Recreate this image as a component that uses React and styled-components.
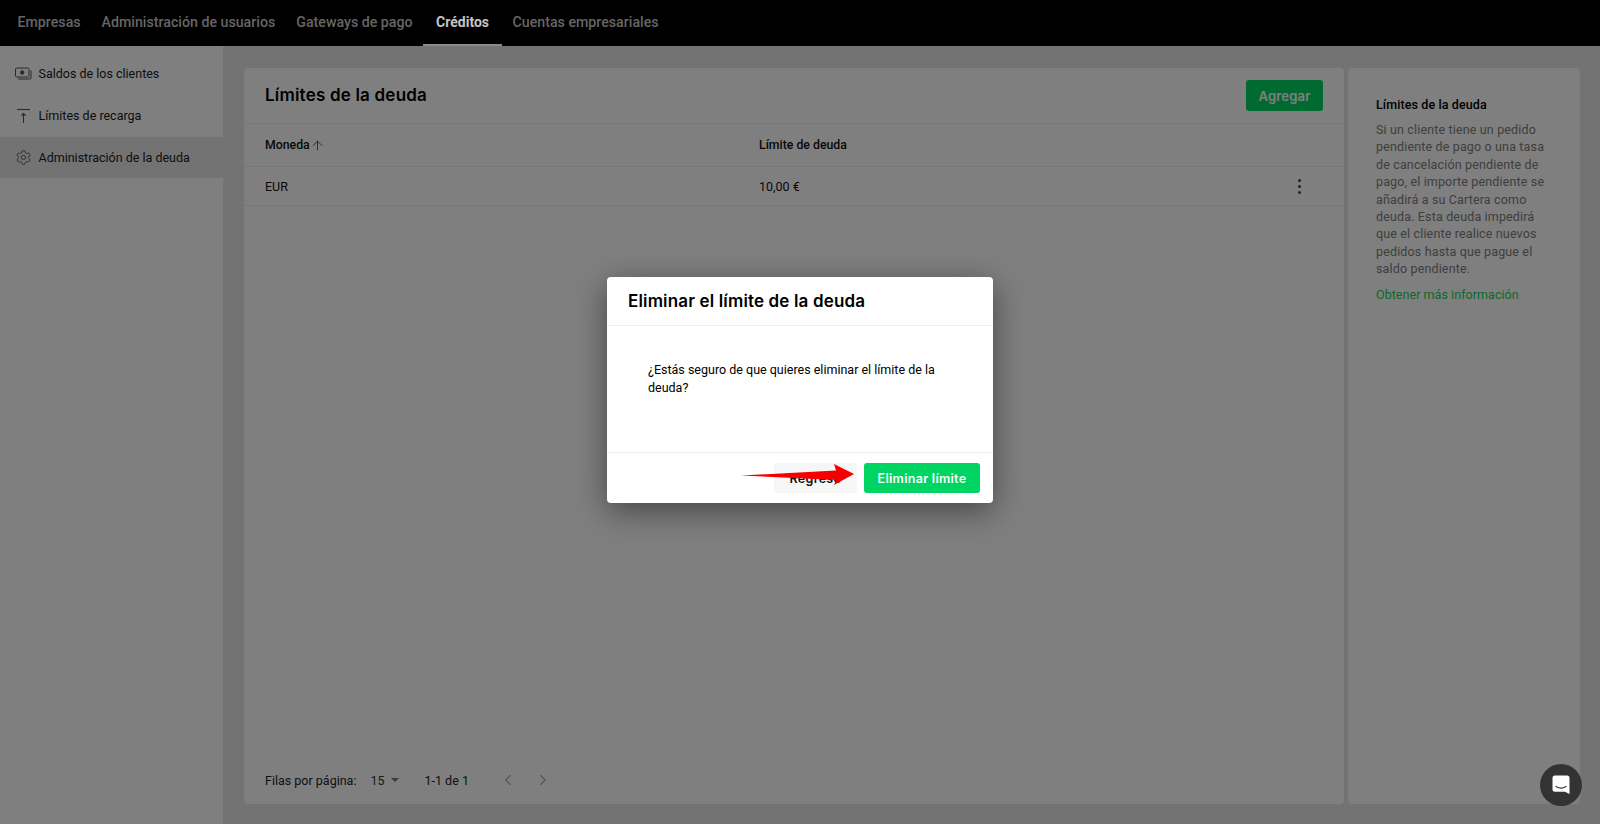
import React from "react";
import styled, { createGlobalStyle } from "styled-components";
import { Settings, ArrowUp, ChevronLeft, ChevronRight } from "lucide-react";

const GlobalStyle = createGlobalStyle`
  *, *::before, *::after {
    box-sizing: border-box;
  }
  html, body {
    margin: 0;
    padding: 0;
    height: 100%;
    overflow: hidden;
  }
  body {
    font-family: Roboto, "Liberation Sans", sans-serif;
    color: #000;
  }
`;

const HEADING_FONT = `Inter, "Open Sans", sans-serif`;

const Page = styled.div`
  position: relative;
  width: 1600px;
  height: 824px;
  display: flex;
  flex-direction: column;
  overflow: hidden;
`;

const TopBar = styled.nav`
  position: relative;
  z-index: 2;
  height: 46px;
  flex: none;
  background: #000;
  display: flex;
  align-items: stretch;
  padding-left: 7px;
`;

const Tab = styled.a`
  display: flex;
  align-items: center;
  padding: 0 ${(p) => (p.$active ? "13px" : "10.5px")};
  font-size: ${(p) => (p.$active ? "14px" : "14.2px")};
  font-weight: ${(p) => (p.$active ? 700 : 500)};
  color: ${(p) => (p.$active ? "#c4c4c4" : "#666")};
  border-bottom: 2px solid ${(p) => (p.$active ? "#8a8a8a" : "transparent")};
  white-space: nowrap;
`;

const Body = styled.div`
  flex: 1;
  display: flex;
  min-height: 0;
`;

const Sidebar = styled.aside`
  width: 223px;
  flex: none;
  background: #fff;
  padding-top: 7px;
`;

const SideItem = styled.a`
  height: ${(p) => (p.$active ? "41px" : "42px")};
  display: flex;
  align-items: center;
  gap: 6.5px;
  padding-left: 15px;
  padding-bottom: 1px;
  font-size: 12.5px;
  color: #1a1a1a;
  background: ${(p) => (p.$active ? "#e6e6e6" : "transparent")};

  svg {
    width: 17px;
    height: 17px;
    flex: none;
    color: #555;
  }
`;

const Main = styled.main`
  flex: 1;
  background: #e6e6e6;
  display: flex;
  gap: 4px;
  padding: 22px 20px 20px 21px;
  min-width: 0;
`;

const Card = styled.section`
  flex: 1;
  background: #fff;
  border-radius: 4px;
  display: flex;
  flex-direction: column;
  min-width: 0;
`;

const CardHead = styled.header`
  height: 56px;
  flex: none;
  display: flex;
  align-items: center;
  justify-content: space-between;
  padding: 0 21px 0 21px;
  border-bottom: 1px solid #eee;
`;

const CardTitle = styled.h1`
  margin: 0 0 1px;
  font-family: ${HEADING_FONT};
  font-size: 17px;
  font-weight: 600;
  letter-spacing: 0.2px;
`;

const AddButton = styled.button`
  width: 77px;
  height: 31px;
  border: 0;
  border-radius: 3px;
  background: #00d563;
  color: #fff;
  font-family: ${HEADING_FONT};
  font-size: 13px;
  font-weight: 600;
  letter-spacing: 0.2px;
`;

const TableRow = styled.div`
  flex: none;
  height: ${(p) => (p.$head ? "43px" : "39px")};
  display: grid;
  grid-template-columns: 494px 1fr 53px;
  align-items: center;
  padding-left: 21px;
  border-bottom: 1px solid #eee;
  font-size: ${(p) => (p.$head ? "12.3px" : "12.5px")};
  font-weight: ${(p) => (p.$head ? 500 : 400)};
  color: #111;
`;

const SortLabel = styled.span`
  display: inline-flex;
  align-items: center;
  gap: 0;

  svg {
    width: 15px;
    height: 15px;
    color: #555;
  }
`;

const Dots = styled.span`
  display: flex;
  flex-direction: column;
  align-items: center;
  gap: 3px;
  width: 16px;

  i {
    width: 3px;
    height: 3px;
    border-radius: 50%;
    background: #444;
  }
`;

const Pager = styled.footer`
  margin-top: auto;
  height: 46px;
  flex: none;
  display: flex;
  align-items: center;
  padding: 0 0 2px 21px;
  font-size: 12.5px;
  color: #222;
`;

const PageSize = styled.span`
  display: inline-flex;
  align-items: center;
  margin-left: 14px;
  gap: 6px;
  font-size: 12.5px;
  color: #333;

  &::after {
    content: "";
    border-left: 4.5px solid transparent;
    border-right: 4.5px solid transparent;
    border-top: 4.5px solid #777;
  }
`;

const PageCount = styled.span`
  margin-left: 26px;
`;

const PageArrows = styled.span`
  display: inline-flex;
  gap: 17px;
  margin-left: 30px;
  color: #aaa;

  svg {
    width: 18px;
    height: 18px;
  }
`;

const HelpCard = styled.aside`
  width: 232px;
  flex: none;
  background: #fff;
  border-radius: 4px;
  padding: 28px 28px 0 28px;
`;

const HelpTitle = styled.h2`
  margin: 0 0 8px;
  font-size: 12.5px;
  line-height: 17px;
  font-weight: 500;
  letter-spacing: 0.1px;
`;

const HelpText = styled.p`
  margin: 0;
  font-size: 12.5px;
  line-height: 17.4px;
  letter-spacing: 0.15px;
  color: #7c7c7c;
`;

const HelpLink = styled.a`
  display: block;
  margin-top: 8px;
  font-size: 12.5px;
  line-height: 17px;
  letter-spacing: 0.05px;
  color: #18d058;
`;

const Overlay = styled.div`
  position: absolute;
  inset: 0;
  z-index: 1;
  background: rgba(0, 0, 0, 0.5);
  display: flex;
  justify-content: center;
  align-items: flex-start;
  padding-top: 277px;
`;

const Modal = styled.div`
  position: relative;
  width: 386px;
  height: 226px;
  background: #fff;
  border-radius: 4px;
  box-shadow: 0 8px 32px rgba(0, 0, 0, 0.45);
  display: flex;
  flex-direction: column;
`;

const ModalHead = styled.div`
  height: 49px;
  flex: none;
  display: flex;
  align-items: center;
  padding-left: 21px;
  border-bottom: 1px solid #eee;
`;

const ModalTitle = styled.h3`
  margin: 0;
  font-family: ${HEADING_FONT};
  font-size: 17px;
  font-weight: 600;
  letter-spacing: 0.15px;
`;

const ModalBody = styled.div`
  flex: 1;
  padding: 35px 41px 0;
  font-size: 12.5px;
  line-height: 17.5px;
`;

const ModalFoot = styled.div`
  height: 51px;
  flex: none;
  display: flex;
  justify-content: flex-end;
  align-items: flex-start;
  gap: 7px;
  padding: 10px 13px 0 0;
  border-top: 1px solid #eee;
`;

const ModalButton = styled.button`
  height: 30px;
  width: ${(p) => (p.$primary ? "116px" : "83px")};
  border: 0;
  border-radius: 3px;
  background: ${(p) => (p.$primary ? "#00d563" : "#f6f6f6")};
  color: ${(p) => (p.$primary ? "#fff" : "#111")};
  font-family: ${HEADING_FONT};
  font-size: 12.5px;
  font-weight: 600;
  letter-spacing: 0.3px;
`;

const Callout = styled.svg`
  position: absolute;
  left: 134px;
  top: 187px;
  width: 113px;
  height: 22px;
`;

const ChatButton = styled.button`
  position: absolute;
  z-index: 3;
  right: 18px;
  bottom: 18px;
  width: 42px;
  height: 42px;
  padding: 0;
  border: 0;
  border-radius: 50%;
  background: #333;
  display: flex;
  align-items: center;
  justify-content: center;
`;

const MoneyIcon = () => (
  <svg viewBox="0 0 17 17" fill="none" stroke="currentColor" strokeWidth="1">
    <rect x="0.5" y="3" width="13.5" height="9" rx="1.2" />
    <circle cx="7.2" cy="7.5" r="1.7" fill="currentColor" />
    <path d="M16 5.5v7.5a1 1 0 0 1-1 1H3" />
  </svg>
);

const LimitIcon = () => (
  <svg viewBox="0 0 17 17" fill="none" stroke="currentColor" strokeWidth="1.1">
    <path d="M2 2.5h13" />
    <path d="M8.5 16V6.5M6.3 8.7l2.2-2.2 2.2 2.2" />
  </svg>
);

const ChatIcon = () => (
  <svg width="18" height="20" viewBox="0 0 18 20">
    <path
      d="M3 0.5h12a2.5 2.5 0 0 1 2.5 2.5v16l-4.5-2.2H3A2.5 2.5 0 0 1 0.5 14.3V3A2.5 2.5 0 0 1 3 0.5z"
      fill="#fff"
    />
    <path
      d="M4 11.5c3 2 7 2 10 0"
      fill="none"
      stroke="#333"
      strokeWidth="1.2"
      strokeLinecap="round"
    />
  </svg>
);

const tabs = [
  "Empresas",
  "Administración de usuarios",
  "Gateways de pago",
  "Créditos",
  "Cuentas empresariales",
];

export default function App() {
  return (
    <Page>
      <GlobalStyle />
      <TopBar>
        {tabs.map((t) => (
          <Tab key={t} $active={t === "Créditos"}>
            {t}
          </Tab>
        ))}
      </TopBar>
      <Body>
        <Sidebar>
          <SideItem>
            <MoneyIcon />
            Saldos de los clientes
          </SideItem>
          <SideItem>
            <LimitIcon />
            Límites de recarga
          </SideItem>
          <SideItem $active>
            <Settings strokeWidth={1.3} />
            Administración de la deuda
          </SideItem>
        </Sidebar>
        <Main>
          <Card>
            <CardHead>
              <CardTitle>Límites de la deuda</CardTitle>
              <AddButton>Agregar</AddButton>
            </CardHead>
            <TableRow $head>
              <SortLabel>
                Moneda
                <ArrowUp strokeWidth={1.5} />
              </SortLabel>
              <span>Límite de deuda</span>
            </TableRow>
            <TableRow>
              <span>EUR</span>
              <span>10,00 €</span>
              <Dots>
                <i />
                <i />
                <i />
              </Dots>
            </TableRow>
            <Pager>
              Filas por página:
              <PageSize>15</PageSize>
              <PageCount>1-1 de 1</PageCount>
              <PageArrows>
                <ChevronLeft strokeWidth={1.5} />
                <ChevronRight strokeWidth={1.5} />
              </PageArrows>
            </Pager>
          </Card>
          <HelpCard>
            <HelpTitle>Límites de la deuda</HelpTitle>
            <HelpText>
              Si un cliente tiene un pedido pendiente de pago o una tasa de
              cancelación pendiente de pago, el importe pendiente se añadirá a
              su Cartera como deuda. Esta deuda impedirá que el cliente realice
              nuevos pedidos hasta que pague el saldo pendiente.
            </HelpText>
            <HelpLink>Obtener más información</HelpLink>
          </HelpCard>
        </Main>
      </Body>
      <Overlay>
        <Modal>
          <ModalHead>
            <ModalTitle>Eliminar el límite de la deuda</ModalTitle>
          </ModalHead>
          <ModalBody>
            ¿Estás seguro de que quieres eliminar el límite de la deuda?
          </ModalBody>
          <ModalFoot>
            <ModalButton>Regreso</ModalButton>
            <ModalButton $primary>Eliminar límite</ModalButton>
          </ModalFoot>
          <Callout viewBox="0 0 113 22">
            <path d="M0 11.5 L95 6.5 L93 0 L113 10 L93 21 L95 16 Z" fill="#f40000" />
          </Callout>
        </Modal>
      </Overlay>
      <ChatButton>
        <ChatIcon />
      </ChatButton>
    </Page>
  );
}
